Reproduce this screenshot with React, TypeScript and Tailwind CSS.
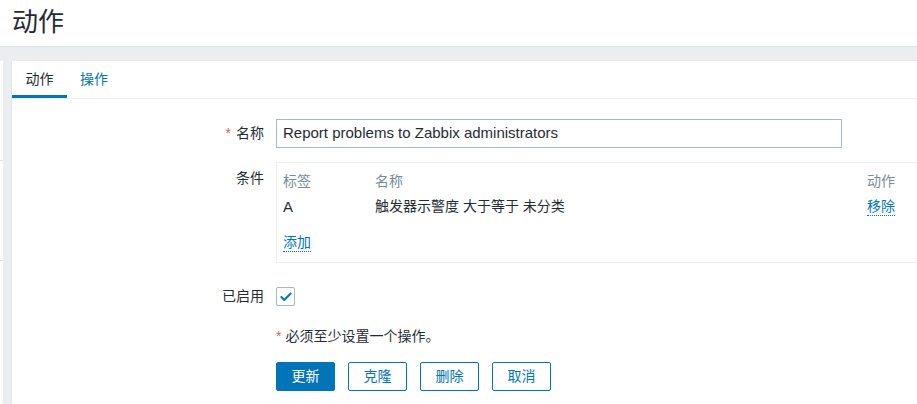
import { Check } from "lucide-react";

const font = { fontFamily: '"Liberation Sans", "Noto Sans CJK SC", sans-serif' };

function Label({ text, required }: { text: string; required?: boolean }) {
  return (
    <div className="w-[252px] shrink-0 pr-0 text-right text-[14px] text-[#1f2c33]">
      {required && <span className="mr-[5px] text-[#e45959]">*</span>}
      {text}
    </div>
  );
}

function DottedLink({ children }: { children: string }) {
  return (
    <span className="border-b border-dotted border-[#0275b8] pb-[1px] text-[#0275b8]">{children}</span>
  );
}

export default function App() {
  return (
    <div className="h-[404px] w-[917px] overflow-hidden bg-[#ebeef0]" style={font}>
      <header className="flex h-[47px] items-center border-b border-[#dfe4e7] bg-white px-[12px]">
        <h1 className="mb-[2px] text-[26px] leading-none text-[#1f2c33]">动作</h1>
      </header>

      <div className="mt-[14px] flex h-full">
        <div className="w-[3px] shrink-0 bg-white">
          <div className="h-[100px] border-b border-[#dfe4e7]" />
          <div className="h-[100px] border-b border-[#dfe4e7]" />
        </div>
        <div className="w-[9px] shrink-0 border-r border-[#dfe4e7] bg-[#ebeef0]" />

        <main className="flex-1 bg-white">
          <nav className="flex h-[38px] items-end border-b border-[#ebeef0] text-[14px]">
            <div className="flex h-full w-[55px] items-center justify-center border-b-[3px] border-[#0275b8] pt-[3px] text-[#1f2c33]">
              动作
            </div>
            <div className="flex h-full items-center pl-[13px] text-[#0275b8]">操作</div>
          </nav>

          <div className="pt-[20px]">
            <div className="flex items-center gap-[12px]">
              <Label text="名称" required />
              <div className="flex h-[29px] w-[566px] items-center border border-[#a9b7bf] px-[6px] text-[15px] text-[#1f2c33]">
                Report problems to Zabbix administrators
              </div>
            </div>

            <div className="mt-[14px] flex items-start gap-[12px]">
              <div className="pt-[6px]">
                <Label text="条件" />
              </div>
              <div className="h-[101px] flex-1 border-y border-l border-[#ebeef0] px-[6px] text-[14px]">
                <div className="mt-[8px] flex text-[#768d99]">
                  <div className="w-[92px]">标签</div>
                  <div className="flex-1">名称</div>
                  <div className="w-[44px]">动作</div>
                </div>
                <div className="mt-[4px] flex text-[#1f2c33]">
                  <div className="w-[92px] text-[15px]">A</div>
                  <div className="flex-1">触发器示警度 大于等于 未分类</div>
                  <div className="w-[44px]">
                    <DottedLink>移除</DottedLink>
                  </div>
                </div>
                <div className="mt-[13px]">
                  <DottedLink>添加</DottedLink>
                </div>
              </div>
            </div>

            <div className="mt-[23px] flex items-center gap-[12px]">
              <Label text="已启用" />
              <div className="flex h-[19px] w-[19px] items-center justify-center rounded-[2px] border border-[#a9b7bf]">
                <Check className="h-[14px] w-[14px] text-[#0275b8]" strokeWidth={3.5} />
              </div>
            </div>

            <div className="ml-[264px] mt-[19px] text-[14px] text-[#1f2c33]">
              <span className="mr-[4px] text-[#e45959]">*</span>必须至少设置一个操作。
            </div>

            <div className="ml-[264px] mt-[15px] flex gap-[13px] text-[14px]">
              <button className="h-[29px] w-[59px] rounded-[2px] border border-[#0275b8] bg-[#0275b8] text-white">
                更新
              </button>
              <button className="h-[29px] w-[59px] rounded-[2px] border border-[#0275b8] bg-white text-[#0275b8]">
                克隆
              </button>
              <button className="h-[29px] w-[59px] rounded-[2px] border border-[#0275b8] bg-white text-[#0275b8]">
                删除
              </button>
              <button className="h-[29px] w-[59px] rounded-[2px] border border-[#0275b8] bg-white text-[#0275b8]">
                取消
              </button>
            </div>
          </div>
        </main>
      </div>
    </div>
  );
}
